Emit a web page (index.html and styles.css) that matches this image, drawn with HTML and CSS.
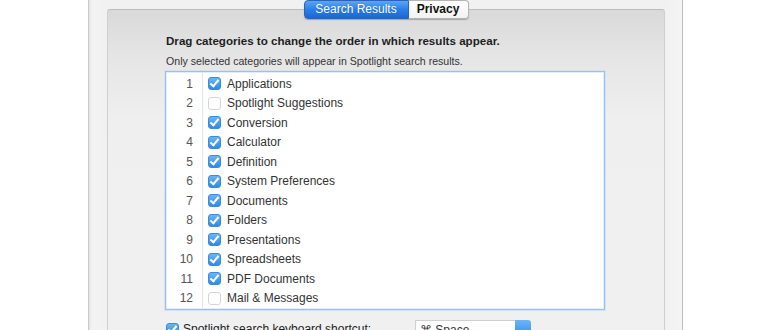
FILE: index.html
```html
<!DOCTYPE html>
<html>
<head>
<meta charset="utf-8">
<link rel="stylesheet" href="styles.css">
</head>
<body>
<div class="window">
  <div class="group">
    <div class="segmented">
      <div class="seg seg-on">Search Results</div>
      <div class="seg seg-off">Privacy</div>
    </div>
    <div class="content">
      <div class="title">Drag categories to change the order in which results appear.</div>
      <div class="subtitle">Only selected categories will appear in Spotlight search results.</div>
      <div class="list">
        <div class="row"><span class="num">1</span><span class="cb on"></span><span class="label">Applications</span></div>
        <div class="row"><span class="num">2</span><span class="cb"></span><span class="label">Spotlight Suggestions</span></div>
        <div class="row"><span class="num">3</span><span class="cb on"></span><span class="label">Conversion</span></div>
        <div class="row"><span class="num">4</span><span class="cb on"></span><span class="label">Calculator</span></div>
        <div class="row"><span class="num">5</span><span class="cb on"></span><span class="label">Definition</span></div>
        <div class="row"><span class="num">6</span><span class="cb on"></span><span class="label">System Preferences</span></div>
        <div class="row"><span class="num">7</span><span class="cb on"></span><span class="label">Documents</span></div>
        <div class="row"><span class="num">8</span><span class="cb on"></span><span class="label">Folders</span></div>
        <div class="row"><span class="num">9</span><span class="cb on"></span><span class="label">Presentations</span></div>
        <div class="row"><span class="num">10</span><span class="cb on"></span><span class="label">Spreadsheets</span></div>
        <div class="row"><span class="num">11</span><span class="cb on"></span><span class="label">PDF Documents</span></div>
        <div class="row"><span class="num">12</span><span class="cb"></span><span class="label">Mail &amp; Messages</span></div>
      </div>
      <div class="bottom">
        <div class="shortcut"><span class="cb on small"></span><span class="sc-label">Spotlight search keyboard shortcut:</span></div>
        <div class="popup"><span class="popup-text">⌘ Space</span><span class="popup-arrow"></span></div>
      </div>
    </div>
  </div>
</div>
</body>
</html>
```
FILE: styles.css
```css
html, body {
  margin: 0;
  padding: 0;
  background: #ffffff;
  overflow: hidden;
}
body {
  width: 770px;
  height: 330px;
  font-family: "Liberation Sans", Arial, sans-serif;
}
.window {
  margin-left: 88px;
  width: 595px;
  height: 340px;
  background: linear-gradient(to right, #e4e4e4 0px, #f3f3f3 3px, #f1f1f1 17px, #f1f1f1 577px, #f4f4f4 593px);
  border-left: 1px solid #c9c9c9;
  border-right: 1px solid #bdbdbd;
  padding-top: 9px;
  box-sizing: border-box;
}
.group {
  margin-left: 18px;
  width: 558px;
  height: 340px;
  box-sizing: border-box;
  border: 1px solid #cfcfcf;
  border-top-color: #bdbdbd;
  border-radius: 3px 3px 0 0;
  background: linear-gradient(to bottom, #d9d9d9 0px, #e6e6e6 50px, #efefef 110px, #f0f0f0 200px);
  display: flex;
  flex-direction: column;
  align-items: center;
}
.segmented {
  margin-top: -10px;
  display: flex;
  height: 19px;
  border-radius: 4px;
  box-shadow: 0 1px 1px rgba(0,0,0,0.25);
  font-size: 12px;
  line-height: 19px;
}
.seg {
  box-sizing: border-box;
  height: 19px;
  text-align: center;
}
.seg-on {
  width: 105px;
  color: #ffffff;
  background: linear-gradient(to bottom, #5aa6f5 0%, #2c7fe8 50%, #1a66d6 100%);
  border: 1px solid #2a63b8;
  border-radius: 4px 0 0 4px;
  line-height: 17px;
  text-shadow: 0 0 1px rgba(0,40,100,0.4);
}
.seg-off {
  width: 60px;
  color: #111;
  font-weight: bold;
  background: linear-gradient(to bottom, #ffffff, #f2f2f2);
  border: 1px solid #b4b4b4;
  border-left: none;
  border-radius: 0 4px 4px 0;
  line-height: 17px;
}
.content {
  align-self: stretch;
  padding-left: 58px;
  padding-top: 15px;
  display: flex;
  flex-direction: column;
}
.title {
  font-size: 11.6px;
  font-weight: bold;
  line-height: 14px;
  color: #1e1e1e;
}
.subtitle {
  margin-top: 6px;
  font-size: 10.6px;
  line-height: 14px;
  color: #333;
}
.list {
  margin-top: 3px;
  margin-left: -1px;
  width: 440px;
  box-sizing: border-box;
  background: #ffffff;
  border: 1px solid #9fc0e6;
  box-shadow: 0 0 0 1px #d2e3f5, inset 0 0 0 1px #e3eef9;
  padding: 2px 0 1px 0;
  background-image: linear-gradient(to right, transparent 36px, #e6e6e6 36px, #e6e6e6 37px, transparent 37px);
}
.row {
  height: 19.5px;
  display: flex;
  align-items: center;
}
.num {
  width: 27px;
  text-align: right;
  font-size: 12px;
  color: #555;
}
.cb {
  margin-left: 15px;
  width: 13px;
  height: 13px;
  box-sizing: border-box;
  border-radius: 3px;
  border: 1px solid #d6d6d6;
  background: #ffffff;
  flex: none;
  position: relative;
}
.cb.on {
  border: 1px solid #3a8be0;
  background: linear-gradient(to bottom, #6bb5f7, #2f8ae6);
}
.cb.on::after {
  content: "";
  position: absolute;
  left: 3px;
  top: 0px;
  width: 3px;
  height: 7px;
  border-right: 2px solid #ffffff;
  border-bottom: 2px solid #ffffff;
  transform: rotate(40deg);
}
.label {
  margin-left: 6px;
  font-size: 12px;
  color: #333;
}
.bottom {
  margin-top: 10px;
  display: flex;
  align-items: flex-start;
}
.shortcut {
  display: flex;
  align-items: center;
  width: 249px;
  margin-top: 2px;
}
.cb.small {
  margin-left: 0;
}
.sc-label {
  margin-left: 4px;
  font-size: 12px;
  color: #222;
}
.popup {
  display: flex;
  height: 18px;
}
.popup-text {
  width: 100px;
  box-sizing: border-box;
  border: 1px solid #d0d0d0;
  border-right: none;
  background: #ffffff;
  font-size: 12px;
  line-height: 18px;
  padding-left: 4px;
  color: #333;
}
.popup-arrow {
  width: 16px;
  background: linear-gradient(to bottom, #6bb5f7, #2f8ae6);
  border-radius: 0 3px 3px 0;
}
```
